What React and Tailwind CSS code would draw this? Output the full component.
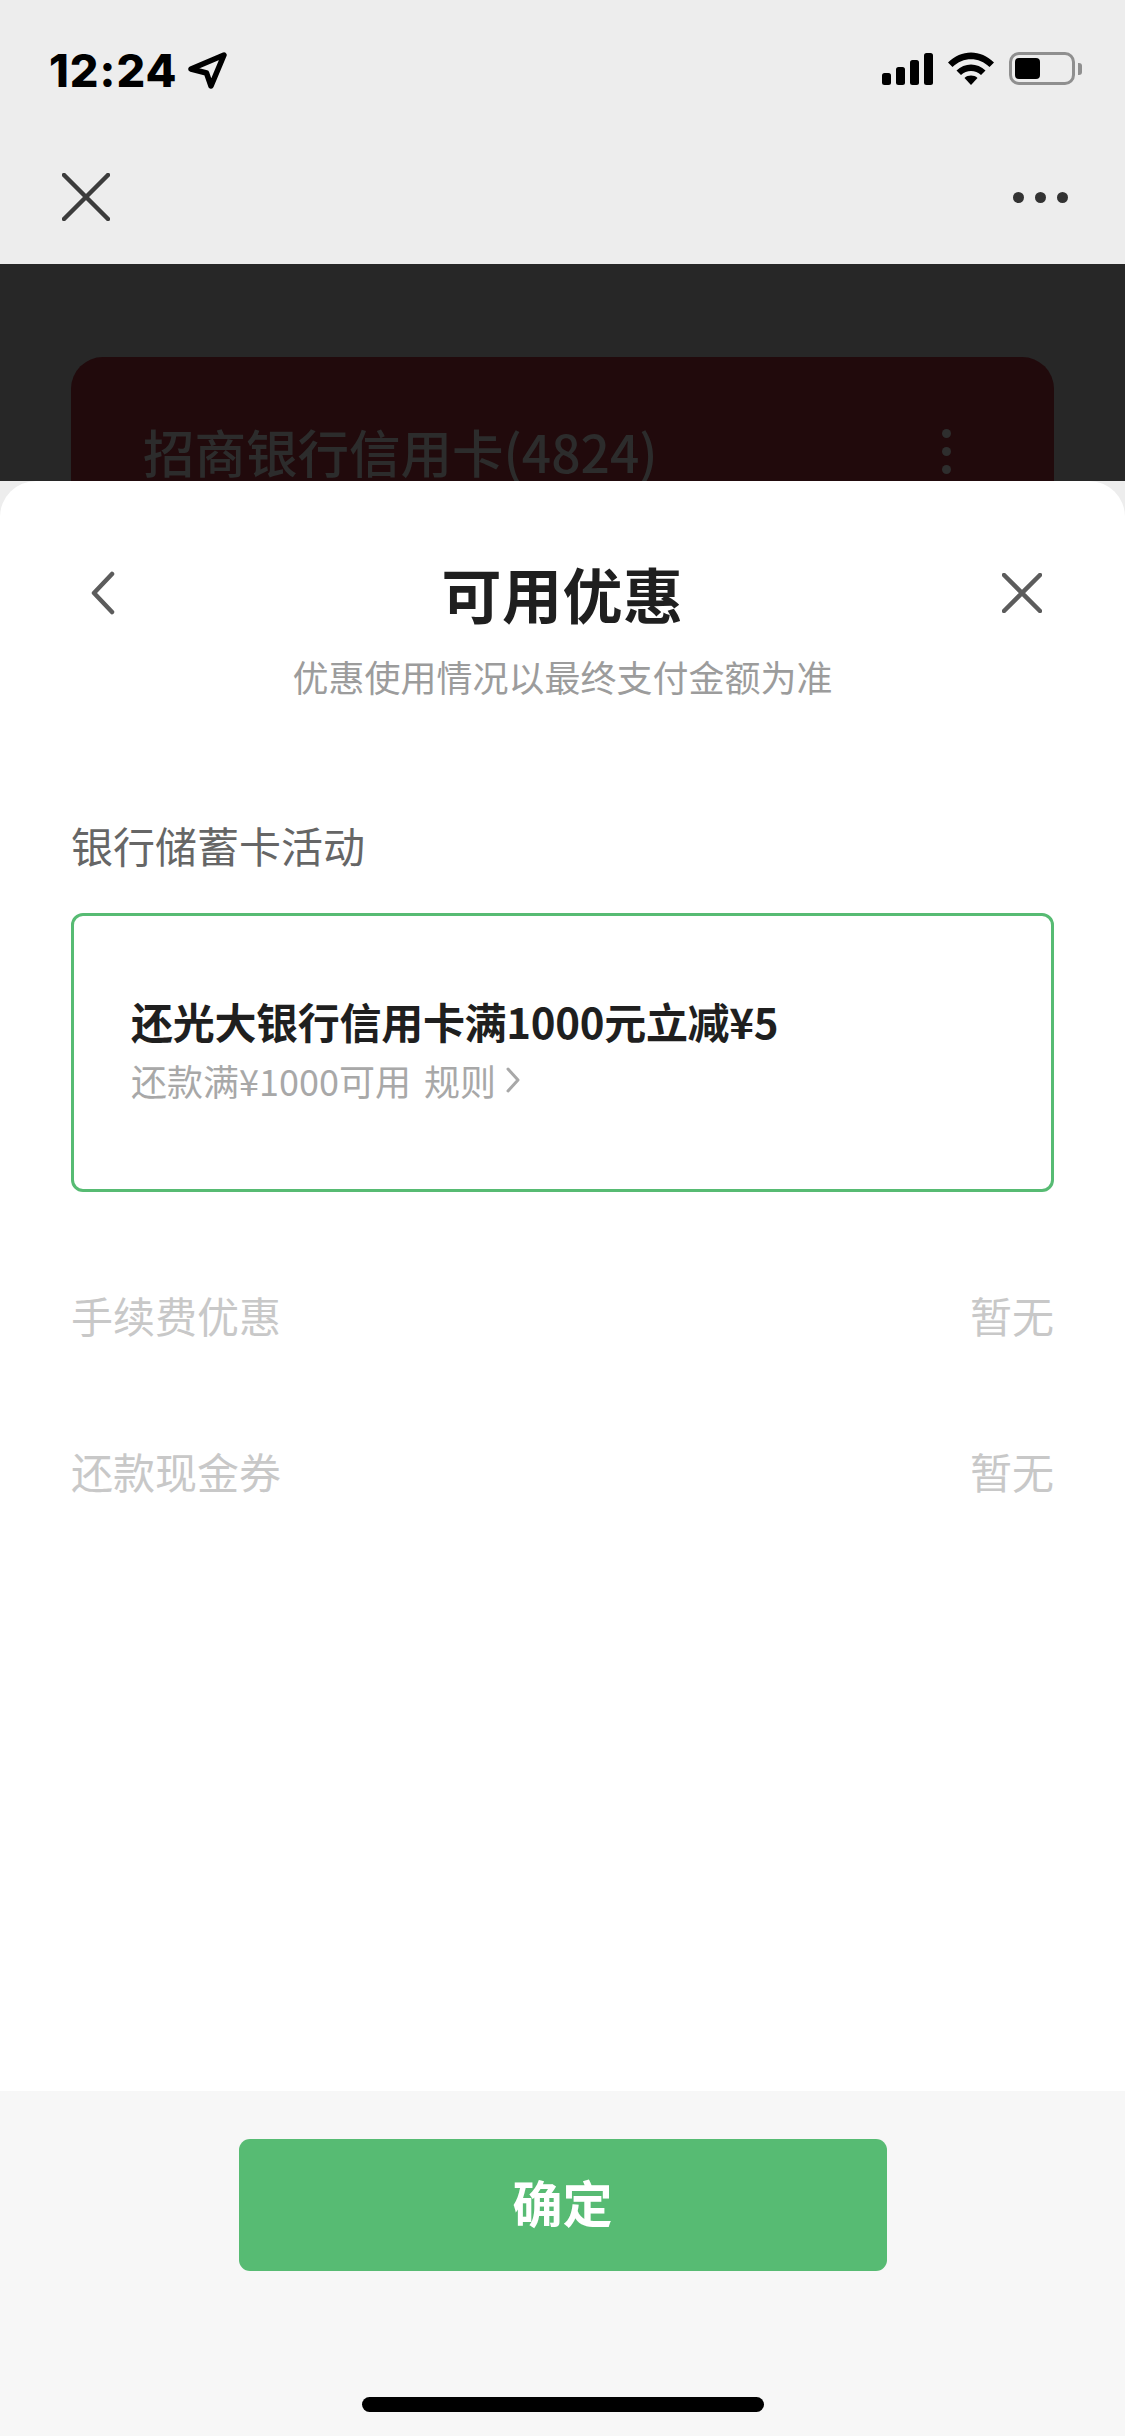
import React from 'react';

const cjk = 'font-["Noto_Sans_CJK_SC","Noto_Sans",sans-serif]';

function StatusBar() {
    return (
        <div className="flex h-[136px] items-start justify-between pl-[49px] pr-[43px] pt-[52px]">
            <div className="flex items-center gap-[11px]">
                <span className='font-["Inter",sans-serif] text-[45px] font-extrabold leading-[35px] tracking-[1px] text-black'>12:24</span>
                <svg width="39" height="37" viewBox="0 0 39 37" fill="none">
                    <path d="M3 17 L36 3 L23 34 L18.5 21 Z" stroke="#000" strokeWidth="5.5" strokeLinejoin="round" />
                </svg>
            </div>
            <div className="flex items-center">
                <div className="flex h-[33px] items-end gap-[5px]">
                    <div className="h-[12px] w-[9px] rounded-[2.5px] bg-black" />
                    <div className="h-[18px] w-[9px] rounded-[2.5px] bg-black" />
                    <div className="h-[25px] w-[9px] rounded-[2.5px] bg-black" />
                    <div className="h-[32px] w-[9px] rounded-[2.5px] bg-black" />
                </div>
                <svg className="ml-[15px]" width="46" height="33" viewBox="0 0 46 33" fill="black">
                    <path d="M0 10.5 C13 -3 33 -3 46 10.5 L41.5 15 C31 4.5 15 4.5 4.5 15 Z" />
                    <path d="M8.5 18.5 C16.5 10.5 29.5 10.5 37.5 18.5 L33 23 C27.5 17.5 18.5 17.5 13 23 Z" />
                    <path d="M16.5 26 C20 22.8 26 22.8 29.5 26 L23 33 Z" />
                </svg>
                <div className="ml-[15px] flex h-[33px] w-[66px] items-center rounded-[10px] border-[3px] border-[#8f8f8f] p-[3px]">
                    <div className="h-full w-[25px] rounded-[4px] bg-black" />
                </div>
                <div className="ml-[3px] h-[12px] w-[4px] rounded-r-[3px] bg-[#8f8f8f]" />
            </div>
        </div>
    );
}

function NavBar() {
    return (
        <div className="flex h-[128px] items-start justify-between pl-[62px] pr-[57px] pt-[37px]">
            <svg width="48" height="48" viewBox="0 0 48 48" fill="none" stroke="#3c3c3c" strokeWidth="4.5" strokeLinecap="round">
                <path d="M2 2 L46 46 M46 2 L2 46" />
            </svg>
            <div className="mt-[19px] flex gap-[11px]">
                <div className="h-[11px] w-[11px] rounded-full bg-[#333]" />
                <div className="h-[11px] w-[11px] rounded-full bg-[#333]" />
                <div className="h-[11px] w-[11px] rounded-full bg-[#333]" />
            </div>
        </div>
    );
}

function EmptyRow({ label, className }) {
    return (
        <div className={`flex items-center justify-between text-[42px] leading-[56px] text-[#c8c8c8] ${className}`}>
            <span>{label}</span>
            <span>暂无</span>
        </div>
    );
}

export default function App() {
    return (
        <div className={`flex h-[2436px] w-[1125px] flex-col overflow-hidden bg-[#ededed] ${cjk}`}>
            <StatusBar />
            <NavBar />

            {/* dimmed page behind the sheet */}
            <div className="h-[217px] shrink-0 overflow-hidden bg-[#272727] px-[71px] pt-[93px]">
                <div className="h-[200px] rounded-[32px] bg-[#210a0c] pl-[72px] pr-[103px] pt-[58px]">
                    <div className="flex items-center justify-between">
                        <span className="text-[51.5px] font-medium leading-[72px] text-[#2c2c2c]">招商银行信用卡(4824)</span>
                        <div className="flex flex-col gap-[9px]">
                            <div className="h-[9px] w-[9px] rounded-full bg-[#2e2e2e]" />
                            <div className="h-[9px] w-[9px] rounded-full bg-[#2e2e2e]" />
                            <div className="h-[9px] w-[9px] rounded-full bg-[#2e2e2e]" />
                        </div>
                    </div>
                </div>
            </div>

            <div className="flex min-h-0 flex-1 flex-col rounded-t-[36px] bg-white">
                <div className="flex-1 px-[71px] pt-[75px]">
                    <div className="flex h-[74px] items-center justify-between px-[20px]">
                        <div className="w-[32px]">
                            <svg width="24" height="44" viewBox="0 0 24 44" fill="none" stroke="#5c5c5c" strokeWidth="4.5" strokeLinecap="round" strokeLinejoin="round">
                                <path d="M21 3 L3 22 L21 41" />
                            </svg>
                        </div>
                        <h1 className="text-[60px] font-bold leading-[74px] tracking-[0.5px] text-[#1f1f1f]">可用优惠</h1>
                        <svg className="mr-[-8px]" width="40" height="40" viewBox="0 0 40 40" fill="none" stroke="#5c5c5c" strokeWidth="4.5" strokeLinecap="round">
                            <path d="M2 2 L38 38 M38 2 L2 38" />
                        </svg>
                    </div>
                    <p className="mt-[21px] text-center text-[36px] leading-[50px] text-[#9c9c9c]">优惠使用情况以最终支付金额为准</p>

                    <div className="mt-[116px] text-[42px] leading-[56px] text-[#666]">银行储蓄卡活动</div>
                    <div className="mt-[40px] flex h-[279px] flex-col rounded-[12px] border-[3px] border-[#57bb73] pl-[57px] pt-[77px]">
                        <div className="text-[42px] font-semibold leading-[56px] tracking-[-0.3px] text-[#1f1f1f]">还光大银行信用卡满1000元立减¥5</div>
                        <div className="mt-[6px] flex items-center text-[36px] leading-[50px] text-[#a8a8a8]">
                            <span>还款满¥1000可用</span>
                            <span className="ml-[13px]">规则</span>
                            <svg className="ml-[9px]" width="16" height="28" viewBox="0 0 16 28" fill="none" stroke="#a8a8a8" strokeWidth="3" strokeLinecap="round" strokeLinejoin="round">
                                <path d="M3 3 L13 14 L3 25" />
                            </svg>
                        </div>
                    </div>

                    <EmptyRow label="手续费优惠" className="mt-[95px]" />
                    <EmptyRow label="还款现金券" className="mt-[100px]" />
                </div>

                <div className="flex h-[345px] shrink-0 flex-col items-center bg-[#f7f7f7] pt-[48px]">
                    <button className="h-[132px] w-[648px] rounded-[11px] bg-[#57bb73] pb-[8px] text-[50px] font-semibold text-white">确定</button>
                    <div className="mt-[126px] h-[15px] w-[402px] rounded-full bg-black" />
                </div>
            </div>
        </div>
    );
}
